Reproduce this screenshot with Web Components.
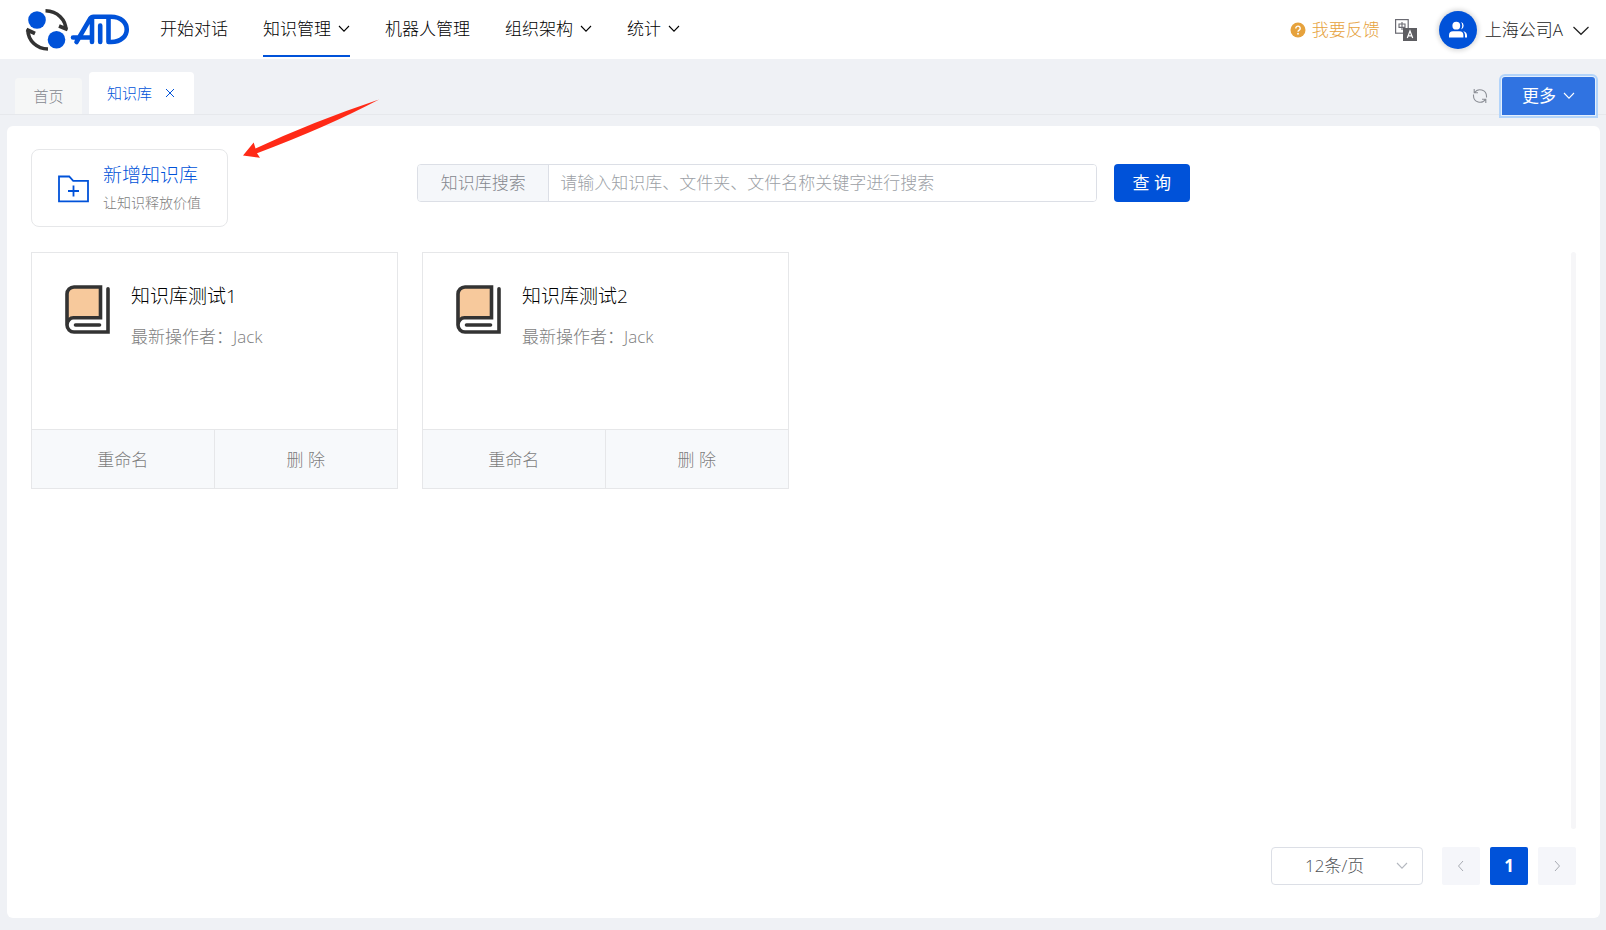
<!DOCTYPE html>
<html lang="zh-CN">
<head>
<meta charset="utf-8">
<meta name="viewport" content="width=device-width, initial-scale=1">
<title>知识库</title>
<style>
  :root {
    --brand: #0052d9;
    --ink: #000;
    --muted: #7d7d7d;
    --line: #e6e7e9;
    --field: #dcdfe6;
    --page: #eff1f5;
  }
  body {
    margin: 0;
    background: var(--page);
    color: var(--ink);
    font: 300 17px/24px "Open Sans", "Noto Sans CJK SC", sans-serif;
  }
</style>
</head>
<body>
<kb-app></kb-app>

<script>
const RESET = `
  *, *::before, *::after { box-sizing: border-box; }
  button, input, select { font: inherit; color: inherit; margin: 0; }
  button { cursor: pointer; border: 0; background: none; padding: 0; }
  a { color: inherit; text-decoration: none; }
  svg { display: block; flex: none; }
`;

function define(name, css, html) {
  customElements.define(name, class extends HTMLElement {
    constructor() {
      super();
      const root = this.attachShadow({ mode: 'open' });
      const t = document.createElement('template');
      const markup = typeof html === 'function' ? html(this) : html;
      t.innerHTML = `<style>${RESET}${css}</style>${markup}`;
      root.append(t.content.cloneNode(true));
    }
  });
}

const ICONS = {
  down: [12, 12, '<path d="M1 3 6 8.200 11 3" fill="none" stroke="currentColor" stroke-width="1.1"/>'],
  downWide: [16, 16, '<path d="M0.5 5 8 12.3 15.5 5" fill="none" stroke="currentColor" stroke-width="1.2"/>'],
  left: [12, 12, '<path d="M8 1 3.5 6 8 11" fill="none" stroke="currentColor"/>'],
  right: [12, 12, '<path d="M4 1 8.5 6 4 11" fill="none" stroke="currentColor"/>'],
  close: [10, 10, '<path d="M1 1 9 9M9 1 1 9" stroke="currentColor" stroke-width="1"/>'],
  refresh: [16, 16, '<path d="M1.500 9.500V8.300A6.500 6.500 0 0 1 13.500 4.800M14.500 6.500V7.700A6.500 6.500 0 0 1 2.500 11.200M2.200 15V11.200H6M13.800 1V4.800H10" fill="none" stroke="currentColor" stroke-width="1.1" transform="translate(16 0) scale(-1 1)"/>'],
  help: [16, 16, '<circle cx="8" cy="8" r="7.5" fill="currentColor"/><path d="M5.8 6.4a2.2 2.2 0 1 1 3.4 1.8c-.8.5-1.2.8-1.2 1.6" fill="none" stroke="#fff" stroke-width="1.4"/><circle cx="8" cy="11.7" r=".95" fill="#fff"/>'],
  lang: [22, 22, '<rect x=".6" y=".6" width="12.6" height="13.6" fill="#fff" stroke="#6a6a72" stroke-width="1.2"/><path d="M4 5h6v3.400H4zM7 3v8" fill="none" stroke="#6a6a72" stroke-width="1.1"/><rect x="8" y="9" width="14" height="13" fill="#5d5d61"/><path d="M12.300 19 15 12l2.700 7M13.200 16.800h3.600" fill="none" stroke="#fff" stroke-width="1.2"/>'],
  users: [20, 20, '<circle cx="8.300" cy="5.700" r="3.900" fill="#fff"/><path d="M1 17.500v-2.300a4 4 0 0 1 4-4h6.400a4 4 0 0 1 4 4v2.300z" fill="#fff"/><path d="M13 2a3.900 3.900 0 0 1 0 7.400c1.700-2.300 1.700-5.100 0-7.400z" fill="#fff"/><path d="M15.200 11.200c2.500.5 3.800 2.100 3.800 4.300v2h-2v-2.300c0-1.700-.7-3-1.800-4z" fill="#fff"/>'],
  folder: [32, 28, '<path d="M1 1.500h10.200l4 4.400h14.800v20.400h-29z" fill="none" stroke="currentColor" stroke-width="1.8"/><path d="M10 16h11M15.500 10.500v11" stroke="currentColor" stroke-width="1.8"/>'],
  book: [46, 50, '<path d="M2 34.500V9a7 7 0 0 1 7-7H35.500V32.500H9" fill="#f7c99c"/><path d="M2 40V9a7 7 0 0 1 7-7H35.500V32.800H9a6.500 7.200 0 0 0-7 7.200 7 7 0 0 0 7 7H43V3.800" fill="none" stroke="#333" stroke-width="3.600" stroke-linecap="round"/><path d="M10.500 40h24" stroke="#333" stroke-width="3.600" stroke-linecap="round"/>'],
  logo: [106, 46, '<circle cx="12" cy="12" r="8.800" fill="#0052d9"/><circle cx="31.500" cy="31.800" r="8.800" fill="#0052d9"/><g fill="none" stroke="#333" stroke-width="3.600"><path d="M20.500 2.800c12 .2 20.500 9 20.500 19.500M42.500 21.500l-8.500-3.500"/><path d="M23 41C12 40.800 3 33 2.800 21.500M1.500 21.500l8.500 4"/></g><g fill="none" stroke="#0052d9" stroke-width="4.600" stroke-linejoin="round" stroke-linecap="round"><path d="M51.500 34 65 10.800Q66.300 8.800 68.500 8.800H86C107 8.800 107 34 86 34H83.500V9M48 29.500H66.300M67 9V34M75.200 17.500V34"/></g>'],
};
define('kb-icon', ':host{display:block;flex:none}', el => {
  const [w, h, body] = ICONS[el.getAttribute('name')];
  return `<svg width="${w}" height="${h}" viewBox="0 0 ${w} ${h}" aria-hidden="true">${body}</svg>`;
});

define('kb-nav-item', `
  :host { display: block; }
  a { display: flex; align-items: center; gap: 7px; height: 57px; padding-top: 2px; border-bottom: 2px solid transparent; white-space: nowrap; }
  :host([active]) a { border-color: var(--brand); }
`, el => `<a href="#"><slot></slot>${el.hasAttribute('menu') ? '<kb-icon name="down"></kb-icon>' : ''}</a>`);

define('kb-header', `
  :host { display: block; background: #fff; }
  header { display: flex; align-items: center; justify-content: space-between; height: 59px; padding: 0 17px 0 25px; }
  nav { display: flex; align-items: flex-start; gap: 35px; height: 59px; }
  nav > a { margin: 8px -6px 0 0; }
  .tools { display: flex; align-items: center; white-space: nowrap; }
  .help { display: flex; align-items: center; gap: 6px; color: #e6a23c; margin-right: 15px; }
  .lang { margin-right: 22px; }
  .user { display: flex; align-items: center; gap: 8px; color: #222; }
  .avatar { display: grid; place-items: center; width: 38px; height: 38px; border-radius: 50%; background: var(--brand); box-shadow: 0 0 4px 2px #ddd; }
  .user > kb-icon:last-child { margin-left: 2px; }
`, `
  <header>
    <nav aria-label="主导航">
      <a href="#" aria-label="AID"><kb-icon name="logo"></kb-icon></a>
      <kb-nav-item>开始对话</kb-nav-item>
      <kb-nav-item menu active>知识管理</kb-nav-item>
      <kb-nav-item>机器人管理</kb-nav-item>
      <kb-nav-item menu>组织架构</kb-nav-item>
      <kb-nav-item menu>统计</kb-nav-item>
    </nav>
    <div class="tools">
      <a class="help" href="#"><kb-icon name="help"></kb-icon>我要反馈</a>
      <button class="lang" aria-label="语言"><kb-icon name="lang"></kb-icon></button>
      <button class="user"><span class="avatar"><kb-icon name="users"></kb-icon></span>上海公司A<kb-icon name="downWide"></kb-icon></button>
    </div>
  </header>
`);

define('kb-tabs', `
  :host { display: block; }
  .bar { display: flex; align-items: flex-end; height: 56px; padding: 0 11px 0 15px; gap: 7px; border-bottom: 1px solid #e6e8ec; }
  a { display: flex; align-items: center; border-radius: 4px 4px 0 0; }
  .home { height: 36px; width: 67px; justify-content: center; font-size: 15px; background: #f6f7f7; color: #85888f; }
  .tab { display: flex; align-items: center; gap: 13px; height: 42px; padding: 0 19px 0 18px; font-size: 15px; background: #fff; color: var(--brand); border-radius: 4px 4px 0 0; }
  .refresh { margin-left: auto; padding: 0 7px 10px 0; color: #8c8f96; }
  .more { display: flex; align-items: center; justify-content: center; gap: 7px; width: 93px; height: 38px; margin-bottom: -1px; background: #3073e1; color: #fff; font-weight: 400; border-radius: 3px 3px 0 0; box-shadow: 0 0 0 1px #e4effc, 0 0 0 3px #b3d4fa; position: relative; }
`, `
  <div class="bar">
    <a class="home" href="#">首页</a>
    <div class="tab"><a href="#" aria-current="page">知识库</a><button aria-label="关闭"><kb-icon name="close"></kb-icon></button></div>
    <button class="refresh" aria-label="刷新"><kb-icon name="refresh"></kb-icon></button>
    <button class="more">更多<kb-icon name="down"></kb-icon></button>
  </div>
`);

define('kb-add', `
  :host { display: block; position: relative; width: 197px; }
  .add { display: flex; align-items: center; gap: 13px; width: 197px; height: 78px; padding: 2px 0 0 26px; border: 1px solid var(--line); border-radius: 8px; text-align: left; color: var(--brand); white-space: nowrap; }
  strong { display: block; font-size: 19px; font-weight: inherit; line-height: 28px; }
  small { display: block; font-size: 14px; line-height: 28px; color: var(--muted); }
  .arrow { position: absolute; left: 211px; bottom: 68px; }
`, `
  <button class="add"><kb-icon name="folder"></kb-icon><span><strong>新增知识库</strong><small>让知识释放价值</small></span></button>
  <svg class="arrow" width="138" height="60" viewBox="0 0 138 60" aria-hidden="true"><path d="M1 56.500 11.700 43.500 13.500 49.500 Q70 23 137 .5 Q85 28 15 54.200 L18 58.700Z" fill="#ff2a17"/></svg>
`);

define('kb-search', `
  :host { display: block; }
  form { display: flex; gap: 17px; height: 38px; }
  .field { display: flex; flex: 1; min-width: 0; border: 1px solid var(--field); border-radius: 4px; overflow: hidden; }
  label { display: flex; align-items: center; justify-content: center; width: 131px; background: #f5f7fa; border-right: 1px solid var(--field); color: #85888f; }
  input { flex: 1; min-width: 0; border: 0; padding: 0 11px; outline: 0; background: #fff; }
  input::placeholder { color: #9c9fa6; opacity: 1; }
  button { width: 76px; border-radius: 4px; background: var(--brand); color: #fff; font-weight: 400; }
`, `
  <form>
    <div class="field"><label for="q">知识库搜索</label><input id="q" type="text" placeholder="请输入知识库、文件夹、文件名称关键字进行搜索"></div>
    <button type="button">查 询</button>
  </form>
`);

define('kb-card', `
  :host { display: block; border: 1px solid var(--line); }
  .body { display: flex; gap: 20px; height: 176px; padding: 32px 33px 0; }
  h3 { margin: 0; font-size: 19px; font-weight: inherit; line-height: 22px; color: #000; }
  p { margin: 18px 0 0; line-height: 24px; color: var(--muted); }
  .actions { display: grid; grid-template-columns: 1fr 1fr; height: 59px; border-top: 1px solid var(--line); background: #f7f9fb; color: var(--muted); }
  .actions button { padding-top: 2px; }
  button:first-child { border-right: 1px solid var(--line); }
`, `
  <div class="body"><kb-icon name="book"></kb-icon><div><h3><slot></slot></h3><p>最新操作者：<slot name="author"></slot></p></div></div>
  <div class="actions"><button>重命名</button><button>删 除</button></div>
`);

define('kb-pager', `
  :host { display: flex; justify-content: flex-end; gap: 19px; }
  .size { display: grid; align-items: center; width: 152px; color: #505256; }
  .size > * { grid-area: 1 / 1; }
  select { appearance: none; width: 152px; height: 38px; padding: 0 33px; border: 1px solid var(--field); border-radius: 4px; background: #fff; }
  .size kb-icon { justify-self: end; margin-right: 15px; color: #b4b8bf; pointer-events: none; }
  nav { display: flex; gap: 10px; }
  nav button { display: grid; place-items: center; width: 38px; height: 38px; border-radius: 2px; background: #f5f6fa; color: #a8abb2; }
  nav .on { background: var(--brand); color: #fff; font-weight: 700; }
`, `
  <div class="size"><select aria-label="每页条数"><option>12条/页</option></select><kb-icon name="down"></kb-icon></div>
  <nav aria-label="分页"><button aria-label="上一页" disabled><kb-icon name="left"></kb-icon></button><button class="on">1</button><button aria-label="下一页" disabled><kb-icon name="right"></kb-icon></button></nav>
`);

define('kb-app', `
  :host { display: flex; flex-direction: column; min-height: 100vh; }
  main { flex: 1; display: flex; flex-direction: column; margin: 11px 6px 12px 7px; padding: 23px 24px 33px; background: #fff; border-radius: 6px; }
  .top { display: grid; grid-template-columns: 1fr 2fr 1fr; align-items: start; margin-bottom: 25px; }
  .list { flex: 1; display: flex; margin-bottom: 18px; }
  .cards { flex: 1; display: grid; grid-template-columns: repeat(4, 1fr); align-content: start; gap: 24px; }
  .track { width: 5px; border-radius: 3px; background: #f6f6f8; }
  kb-search { margin-top: 15px; }
`, `
  <kb-header></kb-header>
  <kb-tabs></kb-tabs>
  <main>
    <div class="top"><kb-add></kb-add><kb-search></kb-search></div>
    <div class="list">
      <div class="cards">
        <kb-card>知识库测试1<span slot="author">Jack</span></kb-card>
        <kb-card>知识库测试2<span slot="author">Jack</span></kb-card>
      </div>
      <div class="track"></div>
    </div>
    <kb-pager></kb-pager>
  </main>
`);
</script>
</body>
</html>
